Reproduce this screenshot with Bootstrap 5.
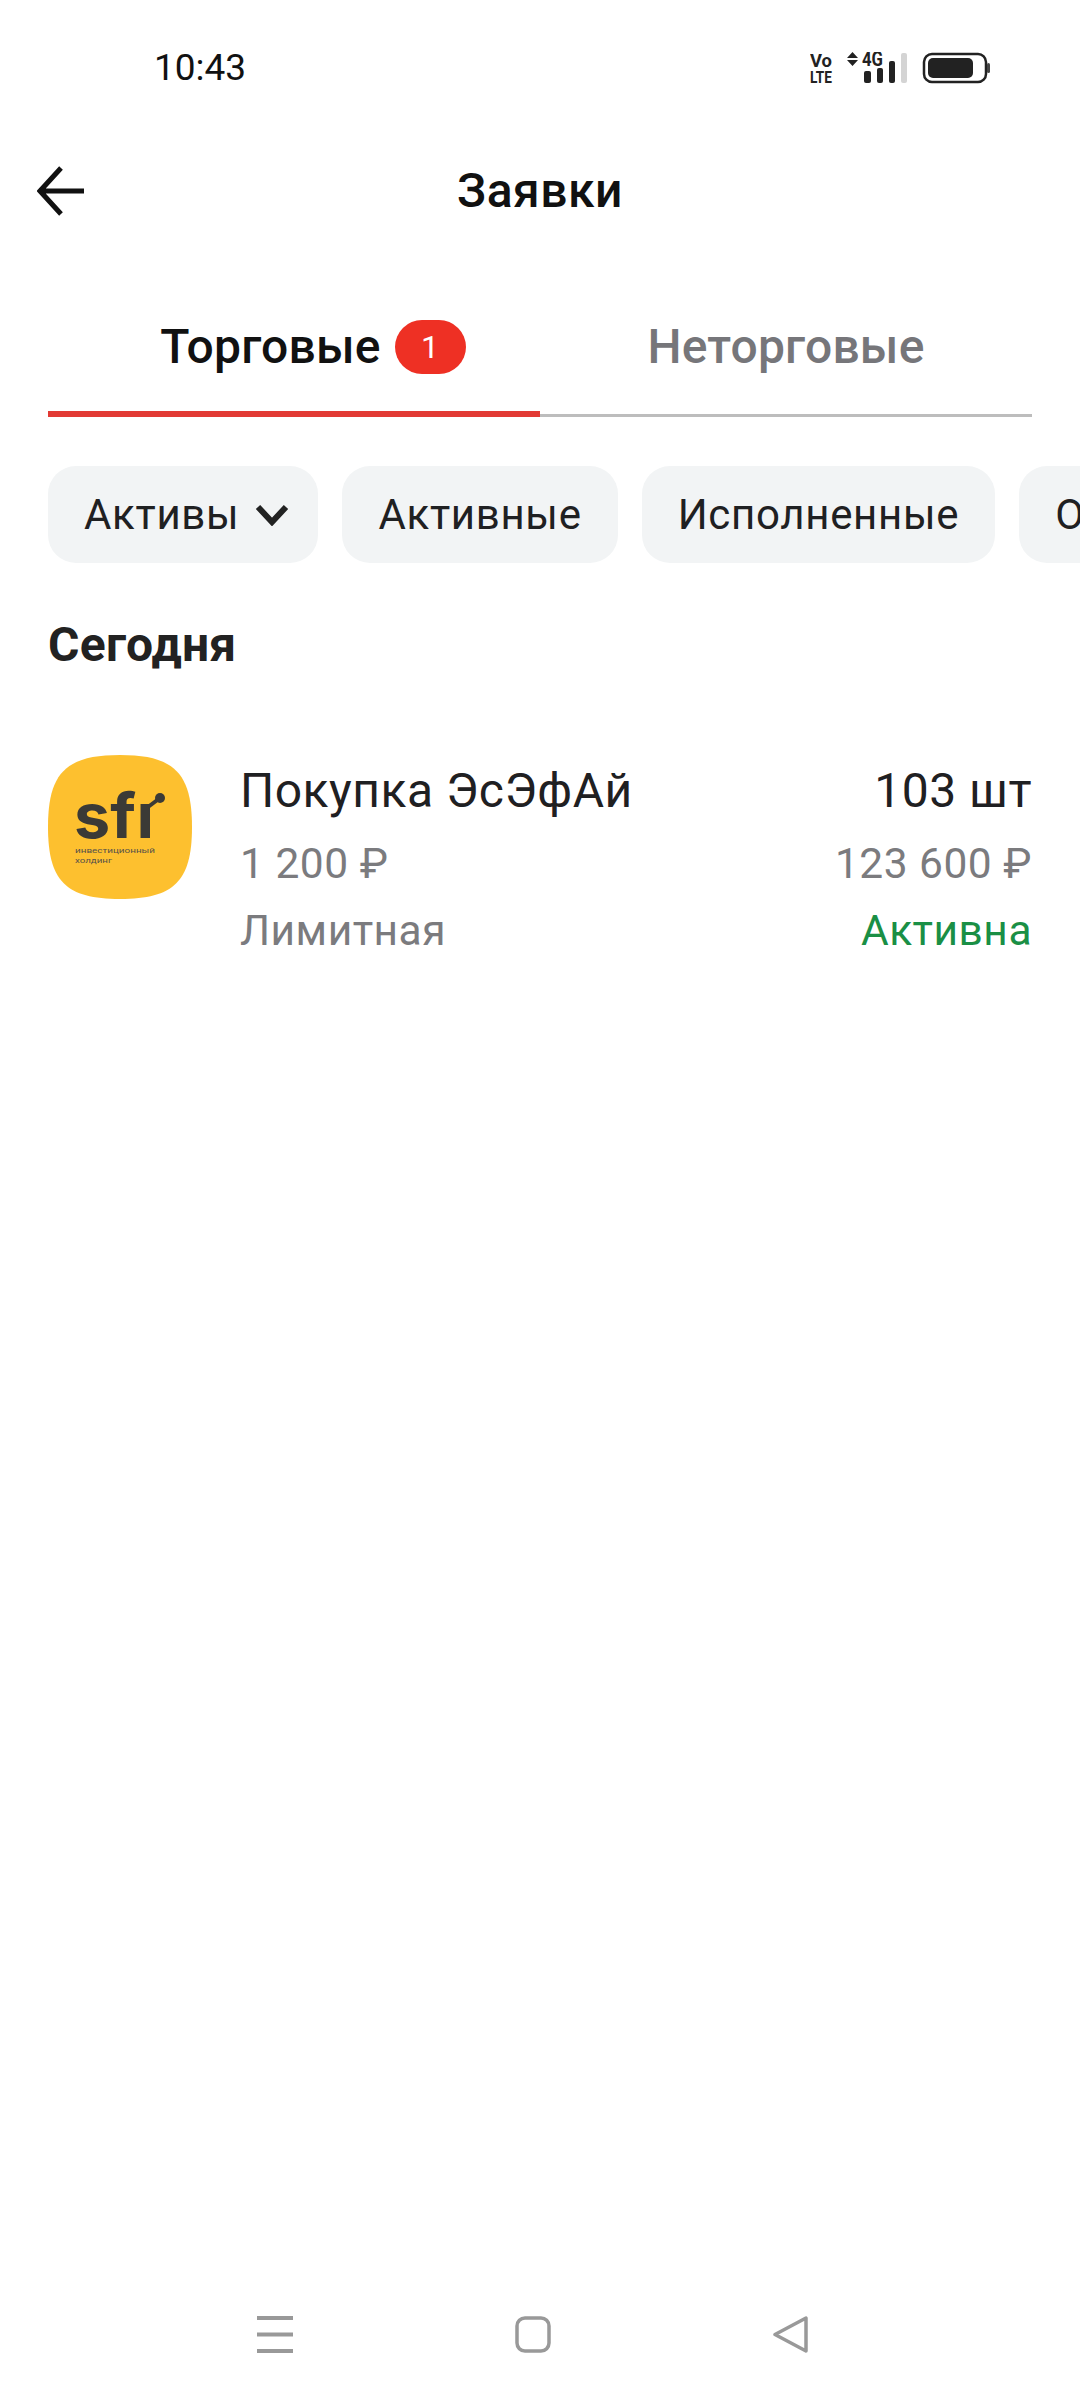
<!DOCTYPE html>
<html lang="ru">
<head>
    <meta charset="UTF-8">
    <meta name="viewport" content="width=device-width, initial-scale=1.0">
    <title>Заявки</title>
    <link href="https://cdn.jsdelivr.net/npm/bootstrap@5.3.2/dist/css/bootstrap.min.css" rel="stylesheet">
    <script src="https://cdn.jsdelivr.net/npm/bootstrap@5.3.2/dist/js/bootstrap.bundle.min.js"></script>
    <style>
        body { font-family: Roboto, "Liberation Sans", sans-serif; background: #fff; color: #1f2022; height: 2400px; overflow: hidden; }
        .status-bar { height: 88px; padding: 47px 88px 0 154px; }
        .status-time { font-size: 37px; line-height: 42px; color: #111; }
        .status-icons { margin-top: 5px; }
        .top-bar { height: 86px; margin-top: 60px; padding-left: 37px; }
        .top-title { font-size: 48px; font-weight: 500; line-height: 54px; color: #111; letter-spacing: .5px; }
        .tab-strip { margin: 40px 48px 0; height: 143px; border-bottom: 3px solid #bdbdbd; }
        .tab-item { width: 50%; height: 143px; padding-top: 46px; font-size: 48px; font-weight: 500; line-height: 54px; letter-spacing: .2px; }
        .tab-on { color: #111; border-bottom: 6px solid #e23a34; padding-left: 38px; }
        .tab-off { color: #76767a; }
        .count-pill { width: 71px; height: 54px; border-radius: 27px; background: #ee3024; color: #fff; font-size: 32px; font-weight: 400; margin-left: 14px; }
        .chip-row { margin-top: 49px; padding-left: 48px; gap: 24px; overflow: hidden; }
        .chip-item { height: 97px; padding: 0 36px; border-radius: 28px; background: #f2f4f5; font-size: 42px; letter-spacing: .7px; white-space: nowrap; flex-shrink: 0; }
        .chip-drop { padding-right: 29px; }
        .day-head { margin: 56px 48px 0; font-size: 48px; font-weight: 700; line-height: 52px; color: #222; letter-spacing: .3px; }
        .order-row { margin: 84px 48px 0; }
        .order-logo { width: 144px; height: 144px; flex-shrink: 0; margin-right: 48px; }
        .order-main { font-size: 48px; line-height: 54px; color: #1f2022; letter-spacing: .5px; margin-top: 9px; }
        .order-sub { font-size: 42.5px; line-height: 48px; color: #7b7b7e; letter-spacing: .5px; margin-top: 22px; }
        .order-sub2 { margin-top: 19px; }
        .status-ok { color: #1a8f45; }
        .nav-bar { position: absolute; left: 0; right: 0; top: 2316px; padding: 0 272px 0 257px; }
    </style>
</head>
<body>
    <div class="status-bar d-flex justify-content-between">
        <div class="status-time">10:43</div>
        <svg class="status-icons" width="182" height="32" viewBox="0 0 182 32" fill="#222">
            <text x="0" y="15" font-family="Roboto" font-weight="700" font-size="19" textLength="22" lengthAdjust="spacingAndGlyphs">Vo</text>
            <text x="0" y="31" font-family="Roboto" font-weight="700" font-size="17" textLength="22" lengthAdjust="spacingAndGlyphs">LTE</text>
            <path d="M37 6l5.500-6 5.500 6zM37 8l5.500 6 5.500-6z"/>
            <text x="52" y="14" font-family="Roboto" font-weight="700" font-size="20" textLength="21" lengthAdjust="spacingAndGlyphs">4G</text>
            <rect x="54" y="19" width="7" height="12" rx="2"/>
            <rect x="67" y="16" width="6" height="15" rx="2"/>
            <rect x="79" y="9" width="6" height="22" rx="2"/>
            <rect x="91" y="1" width="6" height="30" rx="2" fill="#d4d4d4"/>
            <rect x="114" y="2" width="62" height="28" rx="8" fill="none" stroke="#222" stroke-width="2.500"/>
            <rect x="118" y="6" width="45" height="20" rx="5"/>
            <rect x="177" y="11" width="3" height="10" rx="1.500" fill="#444"/>
        </svg>
    </div>

    <div class="top-bar d-flex align-items-center position-relative">
        <svg width="48" height="50" viewBox="0 0 48 50" fill="none" stroke="#111" stroke-width="5">
            <path d="M47 25H4M24 2L3 25l21 23"/>
        </svg>
        <div class="top-title position-absolute start-50 translate-middle-x">Заявки</div>
    </div>

    <div class="tab-strip d-flex">
        <div class="tab-item tab-on d-flex justify-content-center align-items-start">
            Торговые
            <span class="count-pill d-flex align-items-center justify-content-center">1</span>
        </div>
        <div class="tab-item tab-off text-center">Неторговые</div>
    </div>

    <div class="chip-row d-flex">
        <div class="chip-item chip-drop d-flex align-items-center">Активы
            <svg class="ms-3" width="34" height="22" viewBox="0 0 34 22" fill="none" stroke="#222" stroke-width="6">
                <path d="M3 3l14 15L31 3"/>
            </svg>
        </div>
        <div class="chip-item d-flex align-items-center">Активные</div>
        <div class="chip-item d-flex align-items-center">Исполненные</div>
        <div class="chip-item d-flex align-items-center">Отменённые</div>
    </div>

    <div class="day-head">Сегодня</div>

    <div class="order-row d-flex">
        <svg class="order-logo" viewBox="0 0 144 144">
            <path d="M72 0C126 0 144 18 144 72S126 144 72 144 0 126 0 72 18 0 72 0Z" fill="#fdc02f"/>
            <text x="26" y="83" font-family="Inter" font-weight="700" font-size="62" fill="#3b3a36" textLength="80" lengthAdjust="spacingAndGlyphs">sfı</text>
            <path d="M100 52l12-9" stroke="#3b3a36" stroke-width="4" fill="none"/>
            <circle cx="112" cy="43" r="5" fill="#3b3a36"/>
            <text x="27" y="98" font-family="Roboto" font-size="8" fill="#55504a" textLength="80" lengthAdjust="spacingAndGlyphs">инвестиционный</text>
            <text x="27" y="108" font-family="Roboto" font-size="8" fill="#55504a" textLength="37" lengthAdjust="spacingAndGlyphs">холдинг</text>
        </svg>
        <div class="flex-grow-1">
            <div class="d-flex justify-content-between order-main"><span>Покупка ЭсЭфАй</span><span>103 шт</span></div>
            <div class="d-flex justify-content-between order-sub"><span>1 200 ₽</span><span>123 600 ₽</span></div>
            <div class="d-flex justify-content-between order-sub order-sub2"><span>Лимитная</span><span class="status-ok">Активна</span></div>
        </div>
    </div>

    <div class="nav-bar d-flex justify-content-between align-items-center">
        <svg width="36" height="37" viewBox="0 0 36 37" fill="#999">
            <rect y="0" width="36" height="4"/><rect y="16.500" width="36" height="4"/><rect y="33" width="36" height="4"/>
        </svg>
        <svg width="36" height="37" viewBox="0 0 36 37" fill="none" stroke="#999" stroke-width="3.500">
            <rect x="2" y="2" width="32" height="33" rx="8"/>
        </svg>
        <svg width="35" height="37" viewBox="0 0 35 37" fill="none" stroke="#999" stroke-width="3.500" stroke-linejoin="round">
            <path d="M33 2v33L2 18.500Z"/>
        </svg>
    </div>
</body>
</html>
